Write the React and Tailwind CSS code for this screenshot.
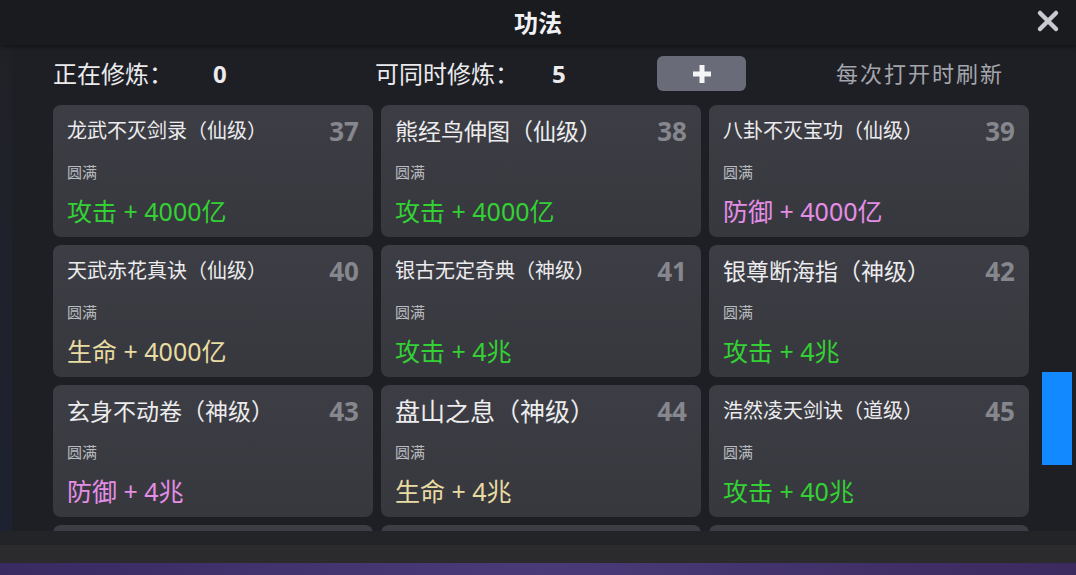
import React from "react";

const FONT = { fontFamily: '"Noto Sans", "Noto Sans CJK SC", sans-serif' };

const GREEN = "text-[#33d133]";
const PINK = "text-[#e48ee6]";
const CREAM = "text-[#e9dca2]";

const skills = [
  { name: "龙武不灭剑录（仙级）", size: "text-[20px]", no: 37, stat: "攻击 + 4000亿", color: GREEN },
  { name: "熊经鸟伸图（仙级）", size: "text-[23px]", no: 38, stat: "攻击 + 4000亿", color: GREEN },
  { name: "八卦不灭宝功（仙级）", size: "text-[20px]", no: 39, stat: "防御 + 4000亿", color: PINK },
  { name: "天武赤花真诀（仙级）", size: "text-[20px]", no: 40, stat: "生命 + 4000亿", color: CREAM },
  { name: "银古无定奇典（神级）", size: "text-[20px]", no: 41, stat: "攻击 + 4兆", color: GREEN },
  { name: "银尊断海指（神级）", size: "text-[23px]", no: 42, stat: "攻击 + 4兆", color: GREEN },
  { name: "玄身不动卷（神级）", size: "text-[23px]", no: 43, stat: "防御 + 4兆", color: PINK },
  { name: "盘山之息（神级）", size: "text-[25px]", no: 44, stat: "生命 + 4兆", color: CREAM },
  { name: "浩然凌天剑诀（道级）", size: "text-[20px]", no: 45, stat: "攻击 + 40兆", color: GREEN },
];

const SkillCard = ({ skill }) => (
  <div className="h-[132px] rounded-lg bg-gradient-to-b from-[#3d3e45] to-[#37383e] px-[14px] pt-[12px]">
    {skill && (
      <>
        <div className="flex h-[28px] items-center justify-between">
          <span className={`${skill.size} leading-none text-[#ececee]`}>{skill.name}</span>
          <span className="text-[26px] font-bold leading-none text-[#86878d]">{skill.no}</span>
        </div>
        <div className="mt-[14px] h-[26px] text-[15px] leading-[26px] text-[#b9babe]">圆满</div>
        <div className={`mt-[11px] h-[30px] text-[25px] leading-[30px] ${skill.color}`}>{skill.stat}</div>
      </>
    )}
  </div>
);

const App = () => {
  return (
    <div className="flex h-[575px] w-[1076px] flex-col overflow-hidden bg-[#1e1f25]" style={FONT}>
      {/* title bar */}
      <div className="relative flex h-[45px] shrink-0 items-center justify-center bg-[#1a1b1f] shadow-[0_2px_4px_rgba(0,0,0,0.4)]">
        <span className="text-[24px] font-bold text-[#f2f2f4]">功法</span>
        <svg className="absolute right-[16px] top-[9px]" width="24" height="24" viewBox="0 0 24 24">
          <path d="M4 4 L20 20 M20 4 L4 20" stroke="#c9c9d2" strokeWidth="4.5" strokeLinecap="round" />
        </svg>
      </div>

      {/* body */}
      <div className="flex h-[486px] shrink-0 overflow-hidden">
        <div className="w-[12px] shrink-0 bg-gradient-to-b from-[#202127] to-[#1e2230]" />
        <div className="flex w-[1018px] shrink-0 flex-col pl-[41px]">
          <div className="mt-[10px] flex h-[37px] shrink-0 items-center text-[24px] text-[#ebebed]">
            <span className="w-[160px] shrink-0">正在修炼：</span>
            <span className="w-[162px] shrink-0 font-bold">0</span>
            <span className="w-[177px] shrink-0">可同时修炼：</span>
            <span className="w-[105px] shrink-0 font-bold">5</span>
            <button className="flex h-[35px] w-[89px] shrink-0 items-center justify-center rounded-md bg-[#6a6b78]">
              <svg width="22" height="22" viewBox="0 0 22 22">
                <path d="M11 2 V20 M2 11 H20" stroke="#f4f4f6" strokeWidth="5" />
              </svg>
            </button>
            <span className="ml-[90px] text-[22px] tracking-[2px] text-[#a4a5ac]">每次打开时刷新</span>
          </div>
          <div className="mt-[13px] grid grid-cols-[320px_320px_320px] gap-x-[8px] gap-y-[8px]">
            {skills.map((s) => (
              <SkillCard key={s.no} skill={s} />
            ))}
            <SkillCard />
            <SkillCard />
            <SkillCard />
          </div>
        </div>
        <div className="flex flex-1 flex-col pl-[12px]">
          <div className="mt-[327px] h-[93px] w-[30px] bg-[#1289ff]" />
        </div>
      </div>

      {/* lower strip */}
      <div className="h-[14px] shrink-0 bg-[#232428]" />
      <div className="h-[18px] shrink-0 bg-[#2b2b2e]" />
      <div className="flex-1 bg-gradient-to-r from-[#3a2a62] via-[#4a3a78] to-[#3b2a5e]" />
    </div>
  );
};

export default App;
